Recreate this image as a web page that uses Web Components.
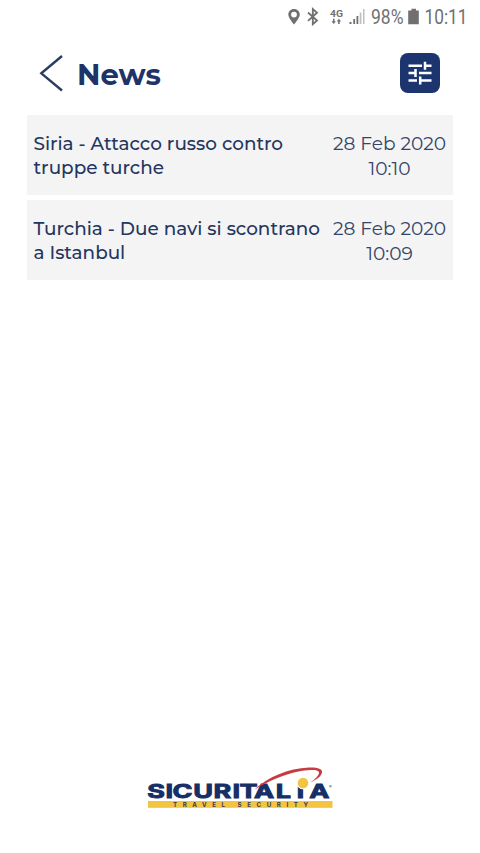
<!DOCTYPE html>
<html lang="it">
<head>
<meta charset="UTF-8">
<meta name="viewport" content="width=device-width, initial-scale=1">
<title>News</title>
<style>
    body {
        margin: 0;
        background: #fff;
        font-family: Montserrat, Inter, sans-serif;
        color: #24365f;
    }
</style>
</head>
<body>
<news-app></news-app>

<script>
class StatusBar extends HTMLElement {
    constructor() {
        super();
        this.attachShadow({ mode: 'open' });
    }

    connectedCallback() {
        this.shadowRoot.innerHTML = `
            <style>
                :host {
                    display: flex;
                    justify-content: flex-end;
                    height: 34px;
                    color: #707070;
                }
                svg { display: block; overflow: visible; }
                text { font-family: Roboto, sans-serif; fill: currentColor; }
            </style>
            <svg width="196" height="34" viewBox="284 0 196 34" fill="currentColor">
                <path fill-rule="evenodd" d="M294 9C290.500 9 288.300 11.500 288.300 14.600C288.300 18.300 294 24.500 294 24.500S299.800 18.300 299.800 14.600C299.800 11.500 297.500 9 294 9ZM294 11.700A2.900 2.900 0 1 1 294 17.500A2.900 2.900 0 1 1 294 11.700Z"/>
                <path d="M308 12.500L317 20.500L312.800 24.200V9L317 12.700L308 20.800" fill="none" stroke="currentColor" stroke-width="1.800"/>
                <text x="330" y="16.500" font-size="9.500" font-weight="700" textLength="13" lengthAdjust="spacingAndGlyphs">4G</text>
                <path d="M331.500 21.300L333.700 24L335.900 21.300H334.500V18.800H332.900V21.300ZM336.700 21.500L338.900 18.800L341.100 21.500H339.700V24H338.100V21.500Z"/>
                <path d="M349.500 22h2v2h-2zM353.300 19h1.800v5h-1.800zM356.500 16h1.800v8h-1.800z"/>
                <path d="M359.700 12.500h1.700v11.500h-1.700zM363 9h1.500v15h-1.500z" opacity=".45"/>
                <text x="371" y="24.300" font-size="20" textLength="32.500" lengthAdjust="spacingAndGlyphs">98%</text>
                <path d="M411.500 8.700h4.500v1.700h2.800v13.800h-10.600V10.400h3.300z"/>
                <text x="424.500" y="24.300" font-size="20" textLength="43" lengthAdjust="spacingAndGlyphs">10:11</text>
            </svg>
        `;
    }
}

class PageHeader extends HTMLElement {
    constructor() {
        super();
        this.attachShadow({ mode: 'open' });
    }

    connectedCallback() {
        this.shadowRoot.innerHTML = `
            <style>
                :host {
                    display: flex;
                    align-items: center;
                    height: 80px;
                    padding: 0 40px 0 38px;
                    box-sizing: border-box;
                    color: #1d3469;
                }
                h1 {
                    flex: 1;
                    margin: 2px 0 0 12px;
                    font-size: 29px;
                    line-height: 36px;
                    font-weight: 700;
                }
                button {
                    display: block;
                    padding: 0;
                    border: 0;
                    background: none;
                    color: inherit;
                }
                svg { display: block; }
                .filter {
                    display: grid;
                    place-items: center;
                    width: 40px;
                    height: 40px;
                    margin-top: -2px;
                    border-radius: 8px;
                    background: #1c356f;
                }
            </style>
            <button aria-label="Indietro">
                <svg width="27" height="40" viewBox="0 0 27 40" fill="none" stroke="#293c62" stroke-width="2.400">
                    <path d="M24 2L3.300 19.300L24 36.500"/>
                </svg>
            </button>
            <h1><slot></slot></h1>
            <button class="filter" aria-label="Filtri">
                <svg width="40" height="40" viewBox="0 0 40 40" fill="none" stroke="#fff" stroke-width="2.500">
                    <path d="M8.500 12.700H22M25 8.700V16.700M25 12.700H31.500M8.500 20H15.500M15.500 16V24M19 20H31.500M8.500 27.500H17M20.200 23.500V31.500M20.200 27.500H31.500"/>
                </svg>
            </button>
        `;
    }
}

class NewsItem extends HTMLElement {
    constructor() {
        super();
        this.attachShadow({ mode: 'open' });
    }

    connectedCallback() {
        this.shadowRoot.innerHTML = `
            <style>
                :host {
                    display: flex;
                    justify-content: space-between;
                    height: 80px;
                    padding: 17px 5.500px 0 6.500px;
                    box-sizing: border-box;
                    background: #f4f4f4;
                }
                .title {
                    font-size: 18.400px;
                    line-height: 23.500px;
                    font-weight: 500;
                    white-space: nowrap;
                }
                .date {
                    width: 116px;
                    margin-top: -1px;
                    font-size: 18.600px;
                    line-height: 25px;
                    text-align: center;
                    white-space: nowrap;
                    color: #35456a;
                }
            </style>
            <div class="title"><slot></slot></div>
            <div class="date">
                <div>${this.getAttribute('date')}</div>
                <div>${this.getAttribute('time')}</div>
            </div>
        `;
    }
}

class BrandLogo extends HTMLElement {
    constructor() {
        super();
        this.attachShadow({ mode: 'open' });
    }

    connectedCallback() {
        this.shadowRoot.innerHTML = `
            <style>
                :host { display: block; }
                svg { display: block; margin: 0 auto; }
                text { font-family: Inter, sans-serif; font-weight: 700; }
                .name { font-weight: 700; }
            </style>
            <svg width="188" height="46" viewBox="146 765 188 46">
                <rect x="148" y="801" width="184.500" height="6.800" fill="#f3c440"/>
                <g transform="translate(147 797.700) scale(1.420 1)">
                    <text class="name" x="0.200 13 17.900 32.500 46.900 60.300 65.200 75.400 90.700 105.400 114.300" y="0" font-size="19" fill="#172f67" stroke="#172f67" stroke-width=".9">SICURITALiA</text>
                </g>
                <circle cx="303" cy="783" r="6.300" fill="#fff"/>
                <path d="M254 790C268 777 288 768.500 309 767.600C319 767.200 324 769.500 321.500 774C320 777 317 779.500 310 782.500C315.500 779 319 775.500 319 772.500C318.500 768.500 305 769.500 292 773C277 777.500 265 783 254 790Z" fill="#c83b43"/>
                <circle cx="303" cy="783" r="5.300" fill="#f3c440"/>
                <text x="173" y="806.700" font-size="6.200" textLength="135" fill="#3a3c4c">TRAVEL SECURITY</text>
                <text x="329" y="787.500" font-size="4" fill="#172f67">®</text>
            </svg>
        `;
    }
}

class NewsApp extends HTMLElement {
    constructor() {
        super();
        this.attachShadow({ mode: 'open' });
    }

    connectedCallback() {
        this.shadowRoot.innerHTML = `
            <style>
                :host {
                    display: flex;
                    flex-direction: column;
                    height: 853px;
                }
                main {
                    flex: 1;
                    display: flex;
                    flex-direction: column;
                    gap: 5px;
                    padding: 1px 27px 0;
                }
                brand-logo { margin-bottom: 42px; }
            </style>
            <status-bar></status-bar>
            <page-header>News</page-header>
            <main>
                <news-item date="28 Feb 2020" time="10:10">Siria - Attacco russo contro<br>truppe turche</news-item>
                <news-item date="28 Feb 2020" time="10:09">Turchia - Due navi si scontrano<br>a Istanbul</news-item>
            </main>
            <brand-logo></brand-logo>
        `;
    }
}

customElements.define('status-bar', StatusBar);
customElements.define('page-header', PageHeader);
customElements.define('news-item', NewsItem);
customElements.define('brand-logo', BrandLogo);
customElements.define('news-app', NewsApp);
</script>
</body>
</html>
